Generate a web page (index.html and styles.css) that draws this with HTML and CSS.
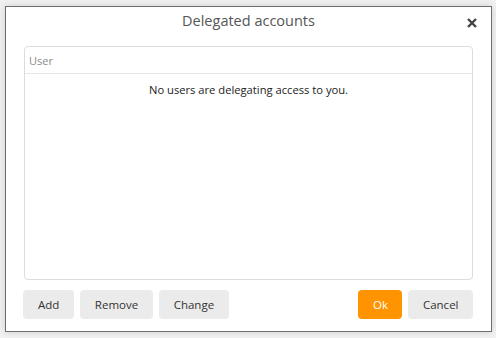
FILE: index.html
```html
<!DOCTYPE html>
<html lang="en">
<head>
    <meta charset="UTF-8">
    <title>Delegated accounts</title>
    <link rel="stylesheet" href="styles.css">
</head>
<body>
    <div class="dialog">
        <div class="dialog-header">
            <h2>Delegated accounts</h2>
            <button class="close" title="Close">
                <svg width="10" height="10" viewBox="0 0 10 10"><path d="M1 1L9 9M9 1L1 9" stroke="#444" stroke-width="2.4"/></svg>
            </button>
        </div>
        <div class="users">
            <div class="users-head">User</div>
            <div class="users-empty">No users are delegating access to you.</div>
        </div>
        <div class="dialog-footer">
            <button class="btn">Add</button>
            <button class="btn tight">Remove</button>
            <button class="btn">Change</button>
            <span class="spacer"></span>
            <button class="btn primary tight">Ok</button>
            <button class="btn tight">Cancel</button>
        </div>
    </div>
</body>
</html>
```

FILE: styles.css
```css
body {
    margin: 0;
    padding: 6px 5px;
    background-color: #f2f2f2;
    font-family: "Open Sans", Arial, sans-serif;
    color: #333;
}
.dialog {
    width: 487px;
    height: 326px;
    background: white;
    border: 1px solid #6e6e6e;
    box-shadow: 0 0 8px rgba(0,0,0,0.15);
    display: flex;
    flex-direction: column;
    padding: 0 18px 12px;
    box-sizing: border-box;
}
.dialog-header {
    height: 39px;
    padding-top: 4px;
    box-sizing: border-box;
    text-align: center;
    position: relative;
}
.dialog-header h2 {
    margin: 0;
    font-size: 14.5px;
    line-height: 20px;
    font-weight: normal;
    color: #555;
}
.close {
    position: absolute;
    right: -5px;
    top: 9px;
    background: none;
    border: none;
    padding: 0;
    width: 12px;
    height: 12px;
    cursor: pointer;
}
.users {
    flex: 1;
    border: 1px solid #dcdcdc;
    border-radius: 4px;
}
.users-head {
    height: 26px;
    line-height: 27px;
    padding-left: 4px;
    font-size: 11px;
    color: #8a8a8a;
    border-bottom: 1px solid #e6e6e6;
}
.users-empty {
    text-align: center;
    font-size: 11.2px;
    padding-top: 8px;
    color: #222;
}
.dialog-footer {
    display: flex;
    gap: 6px;
    margin-top: 10px;
    margin-left: -1px;
}
.spacer {
    flex: 1;
}
.btn {
    height: 29px;
    padding: 0 15px;
    background-color: #ebebeb;
    color: #333;
    border: none;
    border-radius: 4px;
    font-family: "Open Sans", Arial, sans-serif;
    font-size: 11.5px;
    cursor: pointer;
}
.btn.tight {
    padding: 0 14.5px;
}
.btn.primary {
    background-color: #ff9400;
    color: white;
}
```
